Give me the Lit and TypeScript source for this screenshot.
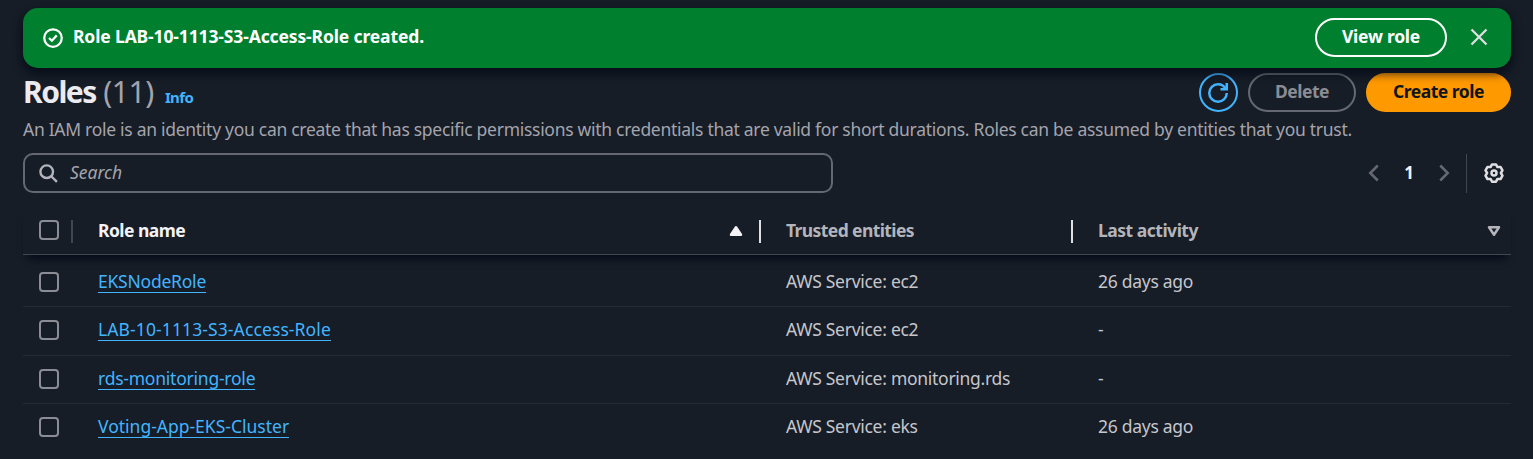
import { LitElement, html, css, svg } from "lit";
import { customElement, property } from "lit/decorators.js";
import { classMap } from "lit/directives/class-map.js";

interface Role {
  name: string;
  tracking: string;
  trusted: string;
  activity: string;
}

const ROLES: Role[] = [
  { name: "EKSNodeRole", tracking: "tight", trusted: "AWS Service: ec2", activity: "26 days ago" },
  { name: "LAB-10-1113-S3-Access-Role", tracking: "wide", trusted: "AWS Service: ec2", activity: "-" },
  { name: "rds-monitoring-role", tracking: "tight", trusted: "AWS Service: monitoring.rds", activity: "-" },
  { name: "Voting-App-EKS-Cluster", tracking: "plain", trusted: "AWS Service: eks", activity: "26 days ago" },
];

const SHAPES: Record<string, unknown> = {
  check: svg`<circle cx="8" cy="8" r="7"/><path d="m4.8 8 2.3 2.2 3.9-4.3"/>`,
  close: svg`<path d="m2 2 12 12M14 2 2 14"/>`,
  refresh: svg`<path d="M15 8c0 3.87-3.13 7-7 7s-7-3.13-7-7 3.13-7 7-7c2.79 0 5.2 1.63 6.33 4"/><path d="M10 5h5V0"/>`,
  search: svg`<circle cx="6.5" cy="6.5" r="5.3"/><path d="m10.3 10.3 4.8 4.8"/>`,
  prev: svg`<path d="M11 2 5 8l6 6"/>`,
  next: svg`<path d="m5 2 6 6-6 6"/>`,
  settings: svg`<path d="M6.4 1.1h3.2l1.15 2.14 2.45-.09 1.6 2.75L13.5 8l1.3 2.1-1.6 2.75-2.45-.09L9.6 14.9H6.4l-1.15-2.14-2.45.09-1.6-2.75L2.5 8 1.2 5.9l1.6-2.75 2.45.09Z"/><circle cx="8" cy="8" r="2"/>`,
  asc: svg`<path class="solid" d="m8 5 4 6H4Z"/>`,
  sort: svg`<path d="M4 5h8l-4 6Z"/>`,
};

@customElement("ui-icon")
export class UiIcon extends LitElement {
  static styles = css`
    :host { display: inline-flex; width: 20px; height: 20px; flex: none; }
    svg { width: 100%; height: 100%; fill: none; stroke: currentColor; stroke-width: 2; overflow: visible; }
    .fine { stroke-width: 1.8; }
    .round { stroke-linejoin: round; }
    .solid { fill: currentColor; }
  `;
  @property() name = "check";
  render() {
    return html`<svg viewBox="0 0 16 16" aria-hidden="true" class=${classMap({
      fine: ["check", "close"].includes(this.name),
      round: ["settings", "asc", "sort"].includes(this.name),
    })}>${SHAPES[this.name]}</svg>`;
  }
}

@customElement("app-root")
export class AppRoot extends LitElement {
  static styles = css`
    :host {
      display: block; box-sizing: border-box; height: 459px; overflow: hidden;
      padding: 8px 22px 0 23px; background: #161d26; color: #c6c6cd;
      font: 400 17.5px/27.5px "Noto Sans", "Open Sans", sans-serif;
    }
    * { box-sizing: border-box; }
    .banner {
      position: relative; z-index: 1; display: flex; align-items: center; height: 60px;
      padding: 0 22px 0 20px; border-radius: 15px; background: #00802f; color: #fff;
      font-weight: 700; box-shadow: 0 5px 10px 1px rgba(0, 7, 22, 0.7);
    }
    .message { flex: 1; padding: 0 0 2px 10px; letter-spacing: -0.13px; }
    .btn {
      height: 39px; display: flex; align-items: center; justify-content: center; padding: 0 0 1px;
      border: 2px solid; border-radius: 20px; background: none; color: inherit;
      font: inherit; font-weight: 700; letter-spacing: -0.48px;
    }
    .view { width: 132px; margin: 0 22px 1px 0; letter-spacing: -0.25px; }
    .dismiss { color: #dedee3; margin-bottom: 2px; }
    .head { display: flex; align-items: center; height: 39px; margin-top: 5px; }
    h1 { flex: 1; margin: 0; padding-top: 4px; font-size: 30px; line-height: 38px; letter-spacing: -1.5px; color: #ebebf0; white-space: nowrap; }
    .count { font-weight: 400; color: #a4a4ad; margin-left: 1px; letter-spacing: -0.4px; }
    .info { margin-left: 11px; font-size: 15px; letter-spacing: -0.6px; color: #42b4ff; }
    .actions { display: flex; gap: 10px; }
    .reload { width: 39px; padding: 0 1px 0 0; color: #42b4ff; }
    .delete { width: 108px; border-color: #656871; color: #8c8c94; }
    .create { width: 145px; border-color: #ff9900; background: #ff9900; color: #0f141a; }
    .about { margin: 4px 0 9.5px; letter-spacing: -0.284px; color: #a4a4ad; white-space: nowrap; }
    .tools { display: flex; justify-content: space-between; height: 40px; }
    .search {
      width: 810px; display: flex; align-items: center; gap: 12px; padding-left: 14px;
      border: 2px solid #656871; border-radius: 10px; color: #b4b4bb;
    }
    .placeholder { font-style: italic; letter-spacing: 0; color: #a4a4ad; }
    .search ui-icon { width: 19px; height: 19px; }
    .pages { display: flex; align-items: center; color: #656871; padding-right: 7px; }
    .page { width: 50px; text-align: center; color: #f3f3f7; font-weight: 700; font-size: 17px; }
    .split { width: 1px; height: 39px; margin: 0 17px 0 12px; background: #424650; }
    .prefs { color: #dedee3; }
    .grid { display: grid; grid-template-columns: 50px 688px 312px 438px; align-items: center; }
    .columns {
      position: relative; height: 50px; margin-top: 12px; padding-top: 3px; margin-bottom: 3.5px;
      border-bottom: 1px solid #424650; font-weight: 700; color: #b4b4bb;
      background: #161d26; box-shadow: 0 8px 8px -5px rgba(0, 7, 22, 0.9);
    }
    .cell { padding-left: 25px; }
    .col { display: flex; align-items: center; justify-content: space-between; height: 23px; padding: 0 14px 0 25px; border-right: 2px solid #dedee3; }
    .col ui-icon { width: 20px; height: 20px; }
    .pick { height: 23px; display: flex; align-items: flex-start; padding-left: 16px; }
    .columns .pick { border-right: 2px solid #424650; }
    .active { color: #f3f3f7; padding-right: 13px; letter-spacing: -0.55px; }
    .trusted { letter-spacing: -0.6px; }
    .last { border: 0; padding-right: 7px; letter-spacing: -0.49px; }
    .box { width: 20px; height: 20px; border: 2px solid #8c8c94; border-radius: 4px; }
    .row { height: 48.5px; padding-bottom: 1.4px; border-bottom: 1px solid #232b37; letter-spacing: -0.28px; }
    .row:last-child { border: 0; padding-bottom: 2.4px; }
    .row .pick { height: 20px; }
    a { display: inline-block; line-height: 22px; height: 23px; border-bottom: 1.25px solid #42b4ff; color: #42b4ff; text-decoration: none; }
    .tight { letter-spacing: -0.23px; }
    .wide { letter-spacing: 0.11px; }
    .plain { letter-spacing: 0; }
  `;

  private row(role: Role) {
    return html`<div class="grid row">
      <div class="pick"><span class="box"></span></div>
      <div class="cell"><a class=${role.tracking}>${role.name}</a></div>
      <div class="cell">${role.trusted}</div>
      <div class="cell">${role.activity}</div>
    </div>`;
  }

  render() {
    return html`
      <div class="banner">
        <ui-icon name="check"></ui-icon>
        <span class="message">Role LAB-10-1113-S3-Access-Role created.</span>
        <button class="btn view">View role</button>
        <ui-icon class="dismiss" name="close"></ui-icon>
      </div>
      <header class="head">
        <h1>Roles <span class="count">(11)</span><span class="info">Info</span></h1>
        <div class="actions">
          <button class="btn reload"><ui-icon name="refresh"></ui-icon></button>
          <button class="btn delete">Delete</button>
          <button class="btn create">Create role</button>
        </div>
      </header>
      <p class="about">An IAM role is an identity you can create that has specific permissions with credentials that are valid for short durations. Roles can be assumed by entities that you trust.</p>
      <div class="tools">
        <div class="search"><ui-icon name="search"></ui-icon><span class="placeholder">Search</span></div>
        <div class="pages">
          <ui-icon name="prev"></ui-icon><span class="page">1</span><ui-icon name="next"></ui-icon>
          <span class="split"></span><ui-icon class="prefs" name="settings"></ui-icon>
        </div>
      </div>
      <div class="grid columns">
        <div class="pick"><span class="box"></span></div>
        <div class="col active">Role name<ui-icon name="asc"></ui-icon></div>
        <div class="col trusted">Trusted entities</div>
        <div class="col last">Last activity<ui-icon name="sort"></ui-icon></div>
      </div>
      ${ROLES.map((role) => this.row(role))}
    `;
  }
}
